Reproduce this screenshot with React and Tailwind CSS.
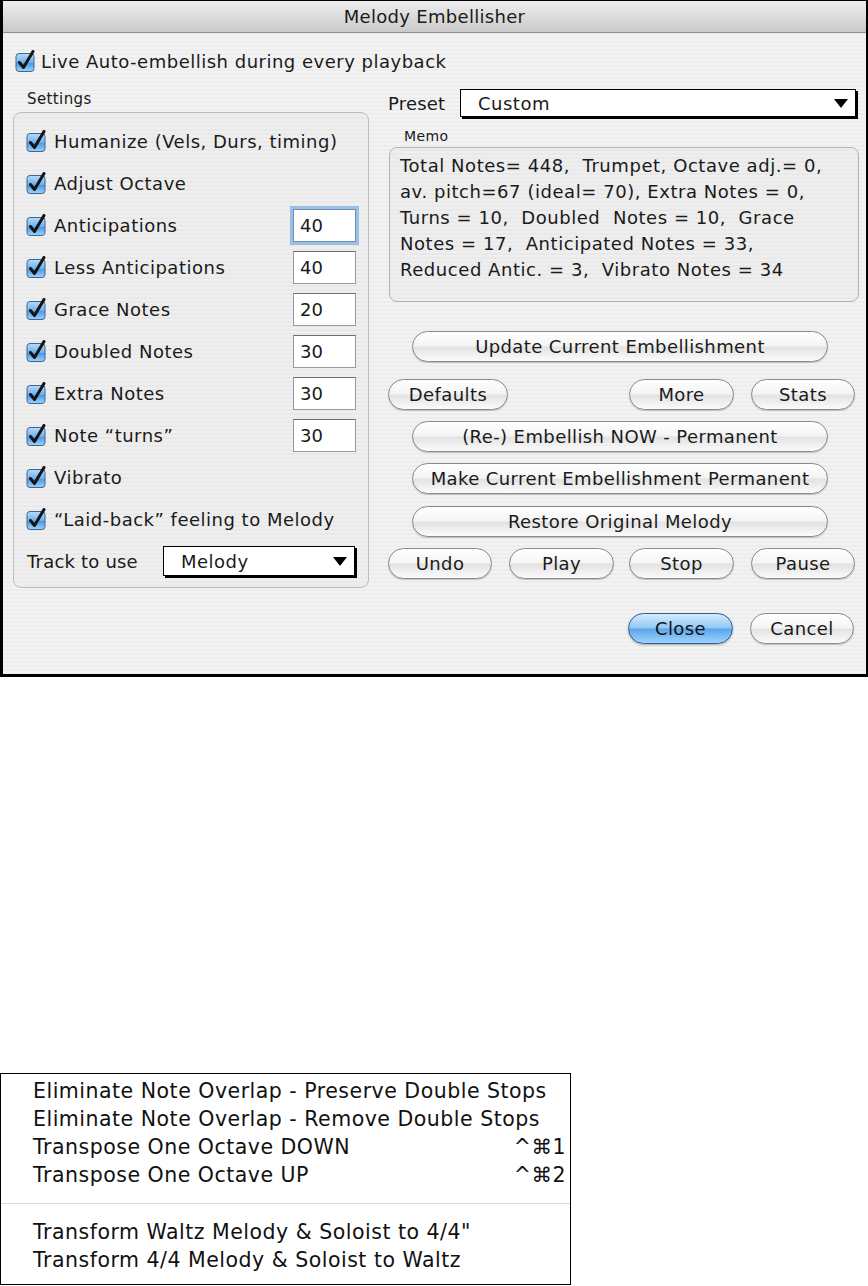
import React from "react";

const FONT = { fontFamily: '"DejaVu Sans", "Noto Sans", sans-serif' };

function Check() {
  return (
    <svg width="22" height="22" viewBox="0 0 22 22" className="shrink-0">
      <defs>
        <linearGradient id="cbg" x1="0" y1="0" x2="0" y2="1">
          <stop offset="0" stopColor="#b9dcfb" />
          <stop offset="0.5" stopColor="#6eb1ee" />
          <stop offset="0.55" stopColor="#4c9ae6" />
          <stop offset="1" stopColor="#9fd3fb" />
        </linearGradient>
      </defs>
      <rect x="1" y="3.5" width="18" height="18" rx="3" fill="url(#cbg)" stroke="#3d6796" strokeWidth="1" />
      <path d="M4.5 12.5 L8.5 17.5 L18 1.5" fill="none" stroke="#141414" strokeWidth="3" strokeLinecap="round" strokeLinejoin="round" />
    </svg>
  );
}

function AquaButton({ children, className = "", blue = false }) {
  return (
    <div
      className={
        blue
          ? `flex h-[31px] items-center justify-center rounded-full border border-[#2f5d98] bg-[linear-gradient(180deg,#d4ebfd_0%,#93c8f5_48%,#5ba6ec_52%,#9fd3fb_100%)] text-[18px] tracking-[0.4px] text-[#111] shadow-[0_1px_2px_rgba(0,0,0,0.3)] ${className}`
          : `flex h-[31px] items-center justify-center rounded-full border border-[#8a8a8a] bg-[linear-gradient(180deg,#ffffff_0%,#f4f4f4_48%,#e2e2e2_52%,#fbfbfb_100%)] text-[18px] tracking-[0.4px] text-[#1a1a1a] shadow-[0_1px_1px_rgba(0,0,0,0.2)] ${className}`
      }
    >
      {children}
    </div>
  );
}

function PopUp({ value, className = "" }) {
  return (
    <div className={`flex items-center justify-between border border-black bg-white shadow-[2px_2px_0_#000] ${className}`}>
      <span className="pl-[17px] text-[18px] tracking-[0.5px] text-[#1a1a1a]">{value}</span>
      <svg width="14" height="9" viewBox="0 0 14 9" className="mr-[7px]">
        <path d="M0 0 H14 L7 9 Z" fill="#000" />
      </svg>
    </div>
  );
}

function NumField({ value, focused = false }) {
  return (
    <div
      className={
        focused
          ? "flex h-[33px] w-[63px] items-center border border-[#6f8fb8] bg-white pl-[6px] text-[18px] text-[#1a1a1a] shadow-[0_0_0_3px_#9cbfe6]"
          : "flex h-[33px] w-[63px] items-center border border-[#9a9a9a] border-t-[#6e6e6e] bg-white pl-[6px] text-[18px] text-[#1a1a1a]"
      }
    >
      {value}
    </div>
  );
}

function SettingRow({ label, value, focused }) {
  return (
    <div className="flex h-[42px] items-center justify-between pl-[12px] pr-[12px]">
      <div className="flex items-center gap-[6px]">
        <Check />
        <span className="text-[18px] tracking-[0.5px] text-[#1a1a1a]">{label}</span>
      </div>
      {value !== undefined && <NumField value={value} focused={focused} />}
    </div>
  );
}

const rows = [
  { label: "Humanize (Vels, Durs, timing)" },
  { label: "Adjust Octave" },
  { label: "Anticipations", value: "40", focused: true },
  { label: "Less Anticipations", value: "40" },
  { label: "Grace Notes", value: "20" },
  { label: "Doubled Notes", value: "30" },
  { label: "Extra Notes", value: "30" },
  { label: "Note \u201cturns\u201d", value: "30" },
  { label: "Vibrato" },
  { label: "\u201cLaid-back\u201d feeling to Melody" },
];

const memo = [
  "Total Notes= 448,  Trumpet, Octave adj.= 0,",
  "av. pitch=67 (ideal= 70), Extra Notes = 0,",
  "Turns = 10,  Doubled  Notes = 10,  Grace",
  "Notes = 17,  Anticipated Notes = 33,",
  "Reduced Antic. = 3,  Vibrato Notes = 34",
];

function MenuItem({ label, shortcut }) {
  return (
    <div className="flex h-[28px] items-center justify-between pl-[32px] pr-[4px] text-[20.5px] tracking-[0.5px] text-[#111]">
      <span>{label}</span>
      {shortcut && <span>{shortcut}</span>}
    </div>
  );
}

export default function App() {
  return (
    <div className="min-h-[1286px] w-[868px] bg-white" style={FONT}>
      {/* Dialog */}
      <div className="flex h-[677px] w-[868px] flex-col border-t border-r-[2px] border-b-[3px] border-l-[3px] border-black bg-[repeating-linear-gradient(180deg,#ededed_0px,#ededed_2px,#f3f3f3_2px,#f3f3f3_4px)]">
        {/* Title bar */}
        <div className="flex h-[32px] shrink-0 items-center justify-center border-b border-[#8e8e8e] bg-[linear-gradient(180deg,#ededed_0%,#dcdcdc_50%,#c9c9c9_100%)] text-[18px] tracking-[0.3px] text-[#1a1a1a]">
          Melody Embellisher
        </div>

        {/* Live auto-embellish */}
        <div className="mt-[16px] flex h-[24px] items-center gap-[4px] pl-[12px]">
          <Check />
          <span className="text-[18px] tracking-[0.5px] text-[#1a1a1a]">Live Auto-embellish during every playback</span>
        </div>

        {/* Columns */}
        <div className="mt-[15px] flex h-[500px] gap-[19px] pl-[10px]">
          {/* Left column */}
          <div className="flex w-[356px] flex-col">
            <div className="flex h-[22px] items-center pl-[14px] text-[15px] tracking-[0.4px] text-[#1a1a1a]">Settings</div>
            <div className="mt-[2px] flex h-[476px] flex-col rounded-[8px] border border-[#bdbdbd] bg-black/[0.015] pt-[7px]">
              {rows.map((r) => (
                <SettingRow key={r.label} {...r} />
              ))}
              <div className="flex h-[42px] items-center pl-[13px] pr-[12px]">
                <span className="w-[136px] text-[18px] tracking-[0.2px] text-[#1a1a1a]">Track to use</span>
                <PopUp value="Melody" className="h-[30px] w-[192px]" />
              </div>
            </div>
          </div>

          {/* Right column */}
          <div className="flex w-[471px] flex-col">
            <div className="mt-[1px] flex h-[28px] items-center">
              <span className="w-[72px] text-[18px] tracking-[0.2px] text-[#1a1a1a]">Preset</span>
              <PopUp value="Custom" className="h-[28px] w-[396px]" />
            </div>
            <div className="mt-[8px] flex h-[22px] items-center pl-[16px] text-[14px] tracking-[0.4px] text-[#1a1a1a]">Memo</div>
            <div className="ml-[1px] h-[155px] w-[470px] rounded-[8px] border border-[#b3b3b3] bg-black/[0.015] pl-[10px] pt-[5px]">
              {memo.map((l) => (
                <div key={l} className="h-[26px] whitespace-pre text-[18px] leading-[26px] tracking-[0.55px] text-[#1a1a1a]">
                  {l}
                </div>
              ))}
            </div>

            <div className="mt-[29px] flex flex-col">
              <AquaButton className="ml-[24px] w-[416px]">Update Current Embellishment</AquaButton>
              <div className="mt-[17px] flex">
                <AquaButton className="w-[120px]">Defaults</AquaButton>
                <AquaButton className="ml-[121px] w-[105px]">More</AquaButton>
                <AquaButton className="ml-[17px] w-[104px]">Stats</AquaButton>
              </div>
              <AquaButton className="ml-[24px] mt-[11px] w-[416px]">(Re-) Embellish NOW - Permanent</AquaButton>
              <AquaButton className="ml-[24px] mt-[11px] w-[416px]">Make Current Embellishment Permanent</AquaButton>
              <AquaButton className="ml-[24px] mt-[12px] w-[416px]">Restore Original Melody</AquaButton>
              <div className="mt-[11px] flex">
                <AquaButton className="w-[104px]">Undo</AquaButton>
                <AquaButton className="ml-[17px] w-[105px]">Play</AquaButton>
                <AquaButton className="ml-[15px] w-[105px]">Stop</AquaButton>
                <AquaButton className="ml-[17px] w-[104px]">Pause</AquaButton>
              </div>
            </div>
          </div>
        </div>

        {/* Bottom buttons */}
        <div className="mt-[25px] flex justify-end gap-[17px] pr-[12px]">
          <AquaButton blue className="w-[105px]">Close</AquaButton>
          <AquaButton className="w-[104px]">Cancel</AquaButton>
        </div>
      </div>

      {/* Menu */}
      <div className="mt-[396px] w-[571px] border border-black bg-white pt-[3px] pb-[10px]">
        <MenuItem label="Eliminate Note Overlap - Preserve Double Stops" />
        <MenuItem label="Eliminate Note Overlap - Remove Double Stops" />
        <MenuItem label="Transpose One Octave DOWN" shortcut={"^\u23181"} />
        <MenuItem label="Transpose One Octave UP" shortcut={"^\u23182"} />
        <div className="flex h-[29px] items-center">
          <div className="h-px w-full bg-[#d9d9d9]" />
        </div>
        <MenuItem label={"Transform Waltz Melody & Soloist to 4/4\""} />
        <MenuItem label="Transform 4/4 Melody & Soloist to Waltz" />
      </div>
    </div>
  );
}
